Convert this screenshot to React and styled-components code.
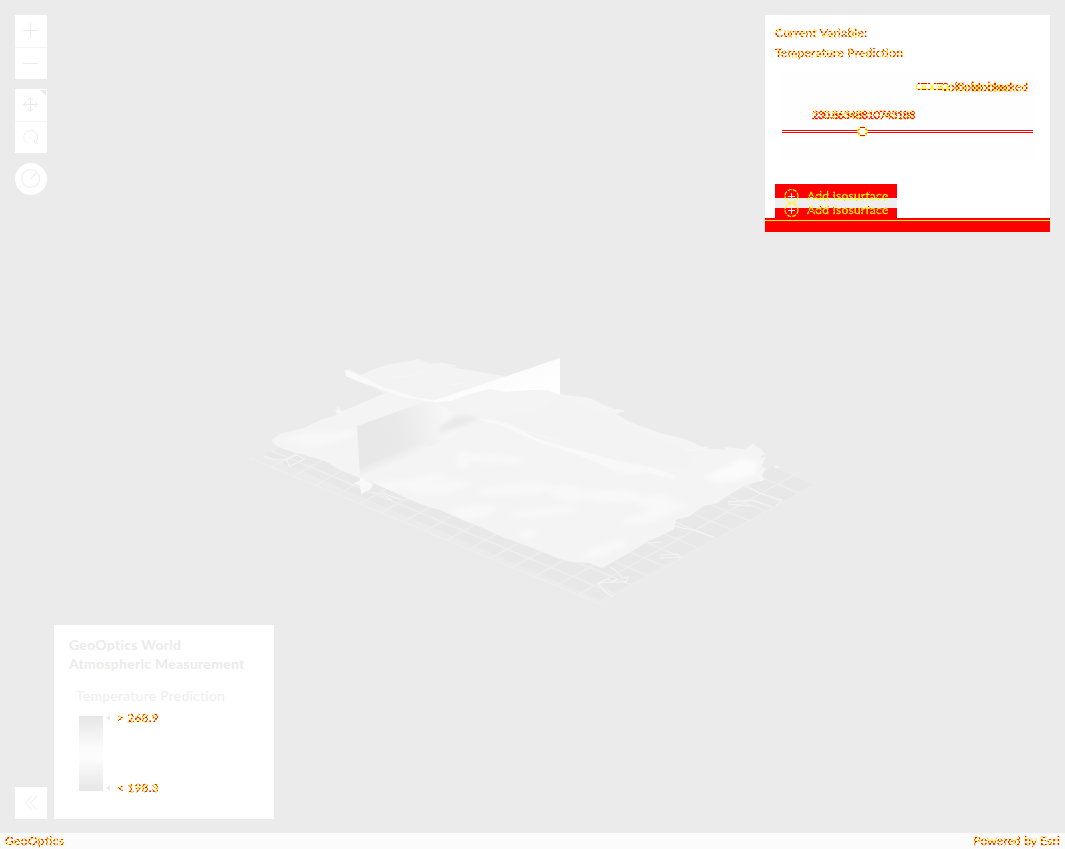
import React from "react";
import styled, { createGlobalStyle, css } from "styled-components";

const Global = createGlobalStyle`
  * { box-sizing: border-box; }
  body { margin: 0; background: #ebebeb; font-family: Lato, "Open Sans", sans-serif; overflow: hidden; }
`;

const marked = css`
  color: transparent;
  background: repeating-conic-gradient(#ff0000 0 25%, #ffff00 0 50%) 0 0 / 4px 4px;
  -webkit-background-clip: text;
  background-clip: text;
  -webkit-text-stroke: 0.3px transparent;
`;

const Page = styled.div`
  width: 1065px;
  height: 849px;
  display: flex;
  flex-direction: column;
  overflow: hidden;
`;

const Stage = styled.main`
  position: relative;
  flex: 1;
  display: flex;
  justify-content: space-between;
  padding: 15px 15px 14px;
  background: #ebebeb;
`;

const Scene = styled.svg`
  position: absolute;
  inset: 0;
`;

const LeftSide = styled.div`
  position: relative;
  display: flex;
  align-items: flex-end;
  gap: 7px;
`;

const ToolColumn = styled.div`
  align-self: stretch;
  width: 32px;
  display: flex;
  flex-direction: column;
  gap: 10px;
`;

const ToolGroup = styled.div`
  height: 64px;
  background: #fff;
  display: flex;
  flex-direction: column;
`;

const ToolButton = styled.button`
  width: 32px;
  height: ${(p) => p.$height || 32}px;
  padding: 0;
  border: 0;
  border-radius: ${(p) => (p.$round ? "50%" : 0)};
  border-bottom: ${(p) => (p.$divided ? "1px solid #f4f4f4" : 0)};
  margin-top: ${(p) => (p.$last ? "auto" : 0)};
  background: #fff;
  svg { display: block; }
`;

const Legend = styled.section`
  width: 220px;
  height: 194px;
  padding: 10px 15px;
  background: #fff;
`;

const LegendTitle = styled.h3`
  margin: 0;
  font-size: 14px;
  line-height: 19px;
  font-weight: 700;
  letter-spacing: 0.28px;
  color: #ebebeb;
  white-space: nowrap;
`;

const LegendCaption = styled.div`
  margin: 13px 0 10px 7px;
  font-size: 14px;
  line-height: 20px;
  letter-spacing: 0.25px;
  color: #eeeeee;
  white-space: nowrap;
`;

const Ramp = styled.div`
  display: flex;
  margin-left: 10px;
  height: 75px;
`;

const RampBar = styled.div`
  width: 24px;
  background: linear-gradient(#e7e7e7, #f2f2f2 25%, #fcfcfc 44%, #fcfcfc 57%, #f0f0f0 80%, #e7e7e7);
`;

const RampLabels = styled.div`
  display: flex;
  flex-direction: column;
  justify-content: space-between;
  margin: -6px 0 -4px 3px;
`;

const RampLabel = styled.div`
  display: flex;
  align-items: center;
  gap: 7px;
  height: 15px;
  font-size: 12px;
  line-height: 15px;
  letter-spacing: 0.15px;
  span { ${marked} }
  &::before {
    content: "";
    border: 3px solid transparent;
    border-left: 0;
    border-right: 4px solid #ebebeb;
  }
`;

const Panel = styled.aside`
  position: relative;
  width: 285px;
  height: 217px;
  padding: 8px 10px 0;
  background: #fff;
  display: flex;
  flex-direction: column;
`;

const PanelText = styled.div`
  height: 20px;
  line-height: 20px;
  font-size: 12px;
  letter-spacing: 0.23px;
  ${marked}
`;

const SliderBox = styled.div`
  height: 90px;
  margin: 8px 7px 0 2px;
  padding: 8px 5px 0;
  background: #fefefe;
`;

const ToggleStack = styled.div`
  display: grid;
  justify-items: end;
`;

const ToggleLabel = styled.div`
  grid-area: 1 / 1;
  display: flex;
  align-items: center;
  gap: 8px;
  height: 16px;
  font-size: 12px;
  line-height: 16px;
  letter-spacing: -0.05px;
  margin-right: ${(p) => p.$shift}px;
  span { ${marked} }
`;

const Value = styled.div`
  width: max-content;
  margin: 13px 0 0 30px;
  font-size: 11px;
  line-height: 14px;
  letter-spacing: -0.45px;
  ${marked}
  background-image: repeating-conic-gradient(#ff0000 0 35%, #ffff00 0 50%);
  -webkit-text-stroke: 0.6px transparent;
`;

const Track = styled.svg`
  display: block;
  margin-top: 3px;
`;

const ButtonStack = styled.div`
  width: 122px;
  height: 34px;
  margin-top: auto;
  margin-bottom: 14px;
  display: flex;
  flex-direction: column;
  background: linear-gradient(#ff0000 14px, #eeeeee 14px 24px, #ff0000 24px);
  overflow: hidden;
`;

const AddButton = styled.div`
  flex: none;
  height: 14px;
  padding-left: 9px;
  display: flex;
  align-items: center;
  gap: 7px;
  margin-top: ${(p) => p.$top}px;
  font-size: 12px;
  line-height: 14px;
  letter-spacing: 0.25px;
  svg { flex: none; margin: -2px 0; }
  span {
    ${marked}
    background-image: repeating-conic-gradient(#ff0000 0 12%, #ffff00 0 50%);
  }
`;

const PanelEdge = styled.div`
  position: absolute;
  left: 0;
  right: 0;
  bottom: 0;
  height: 14px;
  border-top: 2px solid #ff0000;
  background: linear-gradient(#ffff00 1px, #ff0000 1px);
`;

const Footer = styled.footer`
  height: 16px;
  padding: 0 5px;
  display: flex;
  justify-content: space-between;
  background: #fbfbfb;
  font-size: 12px;
  line-height: 15px;
`;

const FooterText = styled.span`
  letter-spacing: ${(p) => p.$spacing}px;
  ${marked}
`;

const Glyph = ({ children, w = 1, c = "#eaeaea", h = 32 }) => (
  <svg width="32" height={h} viewBox={`0 0 32 ${h}`} fill="none" stroke={c} strokeWidth={w}>{children}</svg>
);

function GridLines() {
  const lines = [];
  for (let i = 0; i <= 16; i++) {
    const t = i / 16;
    const x = 250 + 350 * t;
    const y = 458 + 146 * t;
    lines.push(<path key={"a" + i} d={`M${x} ${y}l216 -120`} />);
  }
  for (let i = 1; i <= 13; i++) {
    const t = i / 13;
    lines.push(<path key={"b" + i} d={`M${600 + 216 * t} ${604 - 120 * t}l-350 -146`} />);
  }
  return <g stroke="#eeeeee" strokeWidth="1.4">{lines}</g>;
}

const blobs = [
  [330, 438, 32, 4, -12], [305, 437, 20, 3, -10], [400, 485, 28, 5, -5], [463, 460, 7, 9, 0], [492, 459, 32, 4, 3],
  [440, 487, 30, 5, -6], [515, 490, 38, 5, -4], [568, 493, 19, 7, 5], [612, 496, 30, 6, 2], [655, 501, 18, 6, -4],
  [470, 513, 25, 7, -12], [528, 534, 9, 4, -20], [603, 550, 24, 5, -20], [645, 518, 24, 4, -10], [625, 468, 18, 5, 8],
  [665, 509, 22, 4, -10], [425, 480, 22, 3, -10], [545, 512, 35, 3, -5],
];

function Terrain() {
  return (
    <Scene width="1065" height="833" viewBox="0 0 1065 833" fill="none">
      <defs>
        <filter id="soft" x="-30%" y="-80%" width="160%" height="260%"><feGaussianBlur stdDeviation="2.6" /></filter>
        <clipPath id="gridArea"><path d="M250 458L600 604L816 484L774 467L690 475L540 500L300 442Z" /></clipPath>
        <clipPath id="ground"><path d="M271 440L335 412L390 392L560 395L640 428L722 450L763 448L761 475L747 485L732 493L690 516L674 529L602 568L440 510L360 478L277 446Z" /></clipPath>
        <linearGradient id="wall" x1="357" y1="440" x2="446" y2="420" gradientUnits="userSpaceOnUse">
          <stop stopColor="#e8e8e8" /><stop offset=".48" stopColor="#e9e9e9" /><stop offset=".8" stopColor="#f1f1f1" /><stop offset="1" stopColor="#f6f6f6" />
        </linearGradient>
        <linearGradient id="wallRight" x1="515" y1="365" x2="525" y2="393" gradientUnits="userSpaceOnUse">
          <stop stopColor="#fbfbfb" /><stop offset="1" stopColor="#fefefe" />
        </linearGradient>
        <linearGradient id="bottomFade" x1="390" y1="454" x2="394" y2="464" gradientUnits="userSpaceOnUse">
          <stop stopColor="#f4f4f4" stopOpacity="0" /><stop offset="1" stopColor="#f4f4f4" />
        </linearGradient>
      </defs>
      <g clipPath="url(#gridArea)">
        <path d="M262 454L600 600L816 484L774 467L540 460L300 442Z" fill="#e8e8e8" />
        <GridLines />
      </g>
      <path d="M250 458L600 604" stroke="#f3f3f3" strokeDasharray="2 1" />
      <path d="M264 456l8 3l15 1l2 6l8-3M285 460l12-5l8 4l-7 3M372 492l12 3l8 5M382 492l8 4l13 4M610 567l8 5l4 6l6-1l-2 5h-10l-18 1l7 9l8 5M600 582l8-3l4 3l6-3M648 543l14-1M660 555l18-1l2 3l-20 1M672 525l10 3l12 2l20 7M728 502l24-2l20 7M728 504l22 2M746 485l13 8l23 7l-6 6" stroke="#f4f4f4" strokeWidth="1.1" />
      <path d="M271 440L280 434L304 428L322 419L337 415L335 409L343 411L388 392L430 380L500 375L550 393L590 398L608 407L623 411L616 414L630 422L660 433L685 439L705 448L726 450L724 447L745 449L753 444L763 450L761 458L766 457L762 466L766 469L762 475L764 480L747 485L732 493L717 503L703 506L690 516L676 520L674 529L661 536L648 541L634 550L602 568L590 563L572 562L560 559L530 547L505 538L480 527L460 519L440 510L420 504L400 495L376 484L360 478L338 469L325 461L304 455L286 450L277 446Z" fill="#f4f4f4" />
      <g clipPath="url(#ground)">
        <g filter="url(#soft)">
          <g opacity="0.75">
            {blobs.map(([x, y, rx, ry, r], i) => <ellipse key={i} cx={x} cy={y} rx={rx} ry={ry} fill="#fafafa" transform={`rotate(${r} ${x} ${y})`} />)}
          </g>
          <path d="M705 477L725 467L742 458L758 462L755 474L740 480L715 482Z" fill="#fbfbfb" />
        </g>
        <path d="M455 414L500 420L555 439L620 462L655 468L676 476L674 480L650 473L615 470L575 454L540 443L500 425Z" fill="#f8f8f8" />
        <path d="M650 450l45 0l20-5M575 416l55-1M515 422l50-5" stroke="#f7f7f7" strokeWidth="1" />
      </g>
      <path d="M357 426L427 401L482 418L452 437L420 452L360 477Z" fill="url(#wall)" />
      <path d="M440 427L457 415L474 416L480 419L462 426L440 433Z" fill="#e9e9e9" filter="url(#soft)" />
      <path d="M358 469L360 479L430 448L425 439Z" fill="url(#bottomFade)" />
      <path d="M360 477L373 484L371 489L361 494L360 486L354 483L360 481Z" fill="#f8f8f8" />
      <path d="M345 370L348 369L361 375L372 370L389 364L404 362L419 359L431 364L443 363L456 368L475 371L503 376L550 391L600 412L690 452L688 470L620 461L565 447L535 438L510 424L490 420L473 416L451 411L437 403L421 401L403 398L383 393L374 386L358 381L346 376Z" fill="#f3f3f3" />
      <path d="M345 370L361 376L383 387L415 397L441 401L437 403L403 397L383 390L357 381L346 376Z" fill="#f9f9f9" />
      <path d="M416 372l8-1l-2 3zM451 385l14-2M388 378l25-3M440 363l16 3M475 412l40 16l48 14" stroke="#f7f7f7" strokeWidth="1" />
      <path d="M430 402L560 358V395L546 390L530 392L515 391L500 394L491 389L470 394L450 401Z" fill="url(#wallRight)" />
      <path d="M444 404L470 394L491 389L506 392L528 390L546 390L560 395L540 409L490 419Z" fill="#f4f4f4" />
      <path d="M750 449l3-5M762 453l3 1M758 475l4 6M775 467l4 0M616 410l8 1M338 407l2 6" stroke="#f7f7f7" strokeWidth="1.5" />
    </Scene>
  );
}

const SwitchMark = () => (
  <svg width="16" height="8" fill="none" stroke="#ff0000" shapeRendering="crispEdges">
    <path d="M3 0.5H13M3 6.5H13" />
    <circle cx="3.5" cy="3.5" r="3" stroke="#ffff00" />
    <circle cx="12.5" cy="3.5" r="3" stroke="#ffff00" />
    <path d="M2 0.5h2M2 6.5h2M12 0.5h2M12 6.5h2" />
  </svg>
);

const PlusMark = () => (
  <svg width="16" height="16" fill="none">
    <circle cx="7.5" cy="8" r="6.5" stroke="#ffff00" strokeWidth="1.2" strokeDasharray="4 1.2" />
    <path d="M4 8.5h7M7.5 5v7" stroke="#eeeeee" />
  </svg>
);

export default function App() {
  return (
    <Page>
      <Global />
      <Stage>
        <Terrain />
        <LeftSide>
          <ToolColumn>
            <ToolGroup>
              <ToolButton $divided $height={33}><Glyph><path d="M8 15.5h15M15.5 8v15" /></Glyph></ToolButton>
              <ToolButton $height={31}><Glyph h={31}><path d="M8 15.5h15" /></Glyph></ToolButton>
            </ToolGroup>
            <ToolGroup>
              <ToolButton $divided $height={33}>
                <Glyph>
                  <path d="M8.5 15.5h14M15.5 8.5v14M13 11l2.5-2.5L18 11M13 20l2.5 2.5L18 20M11 13l-2.5 2.5L11 18M20 13l2.5 2.5L20 18" />
                  <path d="M25 1h6v6z" fill="#eaeaea" stroke="none" />
                </Glyph>
              </ToolButton>
              <ToolButton $height={31}>
                <Glyph h={31} c="#eeeeee"><path d="M11 20.8a7 7 0 1 1 9.5-.2M19.5 17.5v3.8h3.5M15.5 15v1" /></Glyph>
              </ToolButton>
            </ToolGroup>
            <ToolButton $round>
              <Glyph w={1.2} c="#eeeeee"><circle cx="15.7" cy="15.5" r="9" /><path d="M16 15.5l6-6.5" /></Glyph>
            </ToolButton>
            <ToolButton $last>
              <Glyph c="#eeeeee"><path d="M17 9l-6.5 6.7L17 22.5M22 9l-6.5 6.7L22 22.5" /></Glyph>
            </ToolButton>
          </ToolColumn>
          <Legend>
            <LegendTitle>GeoOptics World<br />Atmospheric Measurement</LegendTitle>
            <LegendCaption>Temperature Prediction</LegendCaption>
            <Ramp>
              <RampBar />
              <RampLabels>
                <RampLabel><span>&gt; 268.9</span></RampLabel>
                <RampLabel><span>&lt; 198.3</span></RampLabel>
              </RampLabels>
            </Ramp>
          </Legend>
        </LeftSide>
        <Panel>
          <PanelText>Current Variable:</PanelText>
          <PanelText>Temperature Prediction</PanelText>
          <SliderBox>
            <ToggleStack>
              <ToggleLabel $shift={16}><SwitchMark /><span>Color blocked</span></ToggleLabel>
              <ToggleLabel $shift={0}><SwitchMark /><span>Color blocked</span></ToggleLabel>
            </ToggleStack>
            <Value>230.86348810743188</Value>
            <Track width="251" height="14" fill="none">
              <path d="M0 5.5h251M0 7.5h251" stroke="#ff0000" />
              <circle cx="80.5" cy="6.5" r="4.5" fill="#fff" stroke="#ffff00" strokeWidth="1.5" />
              <path d="M78 2.5h5M78 10.5h5M77 4v1M84 4v1M77 8v1M84 8v1" stroke="#ff0000" />
            </Track>
          </SliderBox>
          <ButtonStack>
            <AddButton $top={5}><PlusMark /><span>Add Isosurface</span></AddButton>
            <AddButton $top={0}><PlusMark /><span>Add Isosurface</span></AddButton>
          </ButtonStack>
          <PanelEdge />
        </Panel>
      </Stage>
      <Footer>
        <FooterText $spacing={0.4}>GeoOptics</FooterText>
        <FooterText $spacing={0.15}>Powered by Esri</FooterText>
      </Footer>
    </Page>
  );
}
